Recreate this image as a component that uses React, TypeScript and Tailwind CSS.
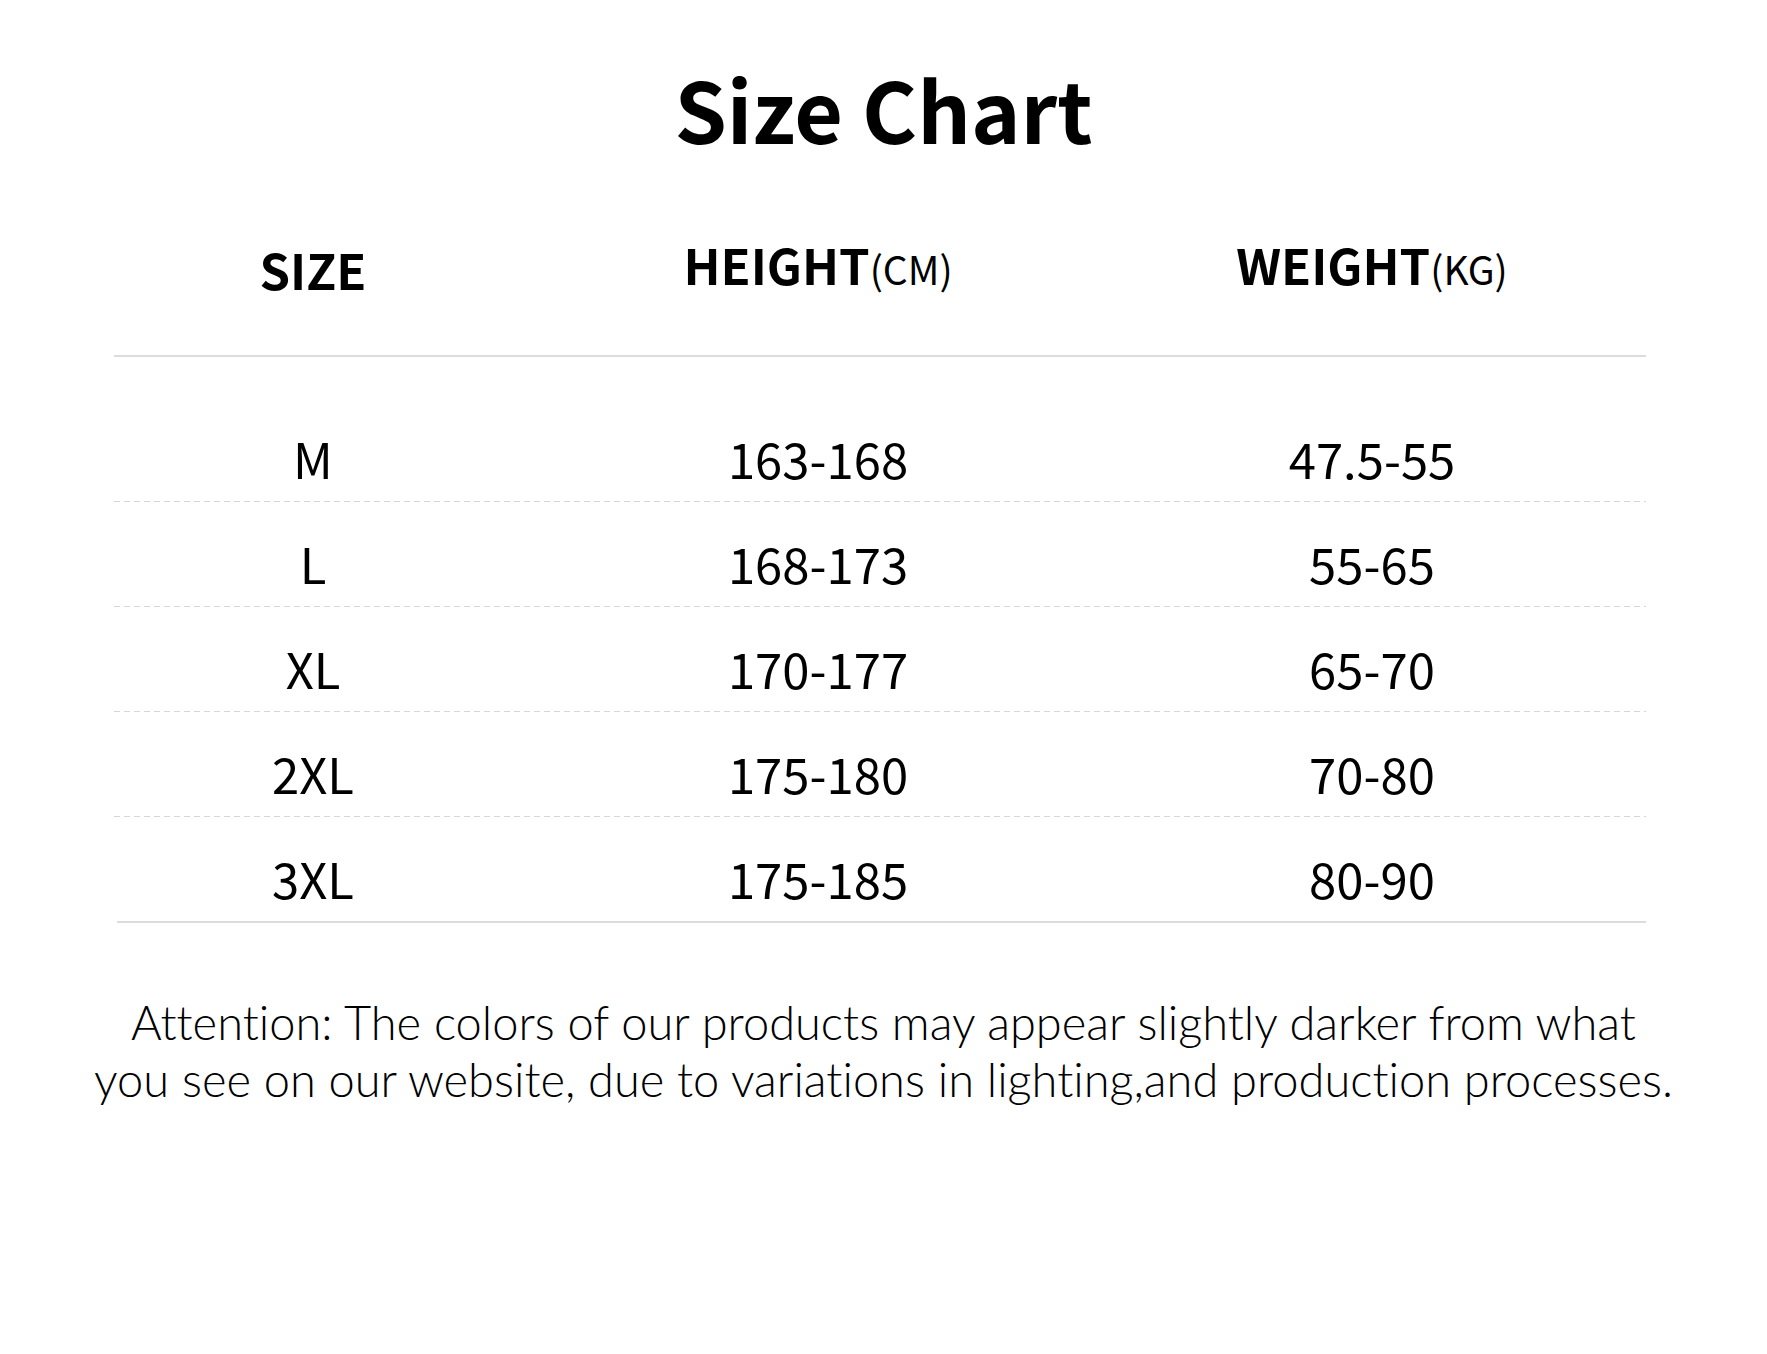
import React from 'react';

const rows = [
  { size: 'M', height: '163-168', weight: '47.5-55' },
  { size: 'L', height: '168-173', weight: '55-65' },
  { size: 'XL', height: '170-177', weight: '65-70' },
  { size: '2XL', height: '175-180', weight: '70-80' },
  { size: '3XL', height: '175-185', weight: '80-90' },
];

const cols = 'grid grid-cols-[398px_612px_496px] items-center';

const App: React.FC = () => {
  return (
    <div className="w-[1767px] h-[1354px] bg-white text-black font-['Noto_Sans_CJK_SC','Noto_Sans',sans-serif]">
      <h1 className="pt-[66px] text-center text-[84px] font-bold leading-none">Size Chart</h1>

      <div className="ml-[114px] w-[1532px]">
        {/* Header */}
        <div className={`${cols} h-[207px] pt-[22px] border-b-2 border-[#dcdcdc] font-bold`}>
          <div className="text-center text-[49px] leading-none pt-[9px]">SIZE</div>
          <div className="text-center text-[49px] leading-none">
            HEIGHT<span className="text-[39px] font-normal">(CM)</span>
          </div>
          <div className="text-center text-[49px] leading-none">
            WEIGHT<span className="text-[39px] font-normal">(KG)</span>
          </div>
        </div>

        {/* Rows */}
        <div className="mt-[40px]">
          {rows.map((row, i) => {
            const last = i === rows.length - 1;
            return (
              <div key={row.size}>
                <div className={`${cols} h-[104px] pt-[16px] text-[49px] leading-none`}>
                  <div className="text-center">{row.size}</div>
                  <div className="text-center">{row.height}</div>
                  <div className="text-center">{row.weight}</div>
                </div>
                {last ? (
                  <div className="ml-[3px] h-[2px] bg-[#dcdcdc]" />
                ) : (
                  <div className="h-px bg-[repeating-linear-gradient(to_right,#d6d6d6_0_6px,transparent_6px_10px)]" />
                )}
              </div>
            );
          })}
        </div>
      </div>

      <p className="mt-[71px] text-center text-[47px] leading-[57px] font-light font-['Lato',sans-serif] [font-variant-ligatures:none]">
        Attention: The colors of our products may appear slightly darker from what
        <br />
        you see on our website, due to variations in lighting,and production processes.
      </p>
    </div>
  );
};

export default App;
